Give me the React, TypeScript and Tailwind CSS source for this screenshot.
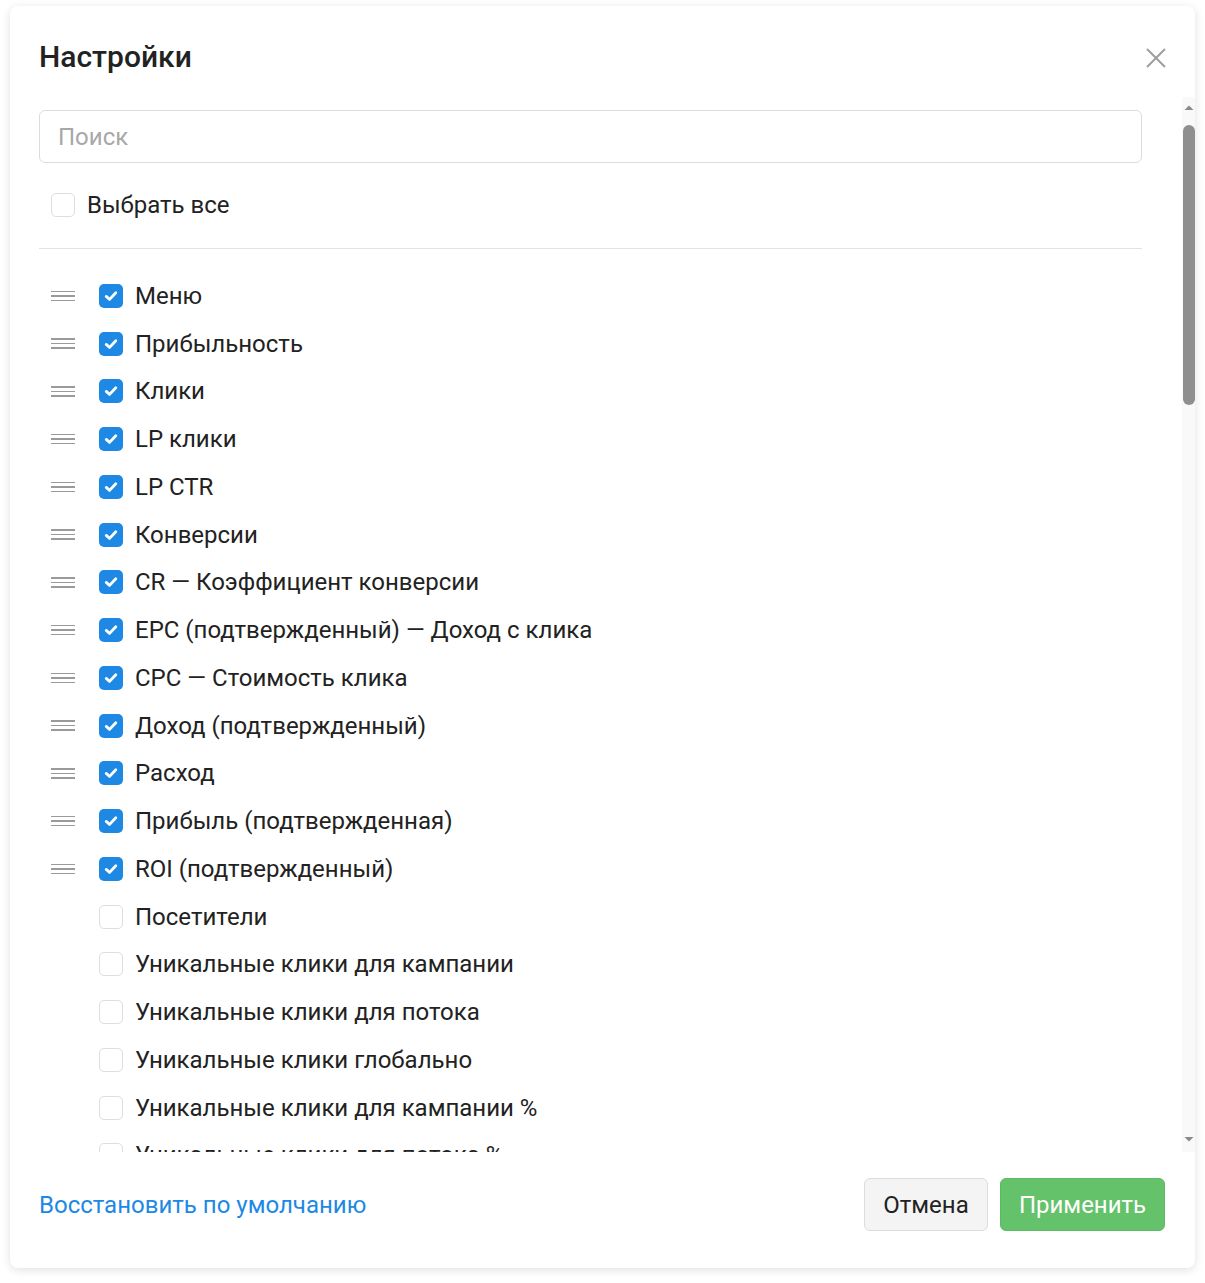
import React from "react";

const items: { label: string; checked: boolean }[] = [
  { label: "Меню", checked: true },
  { label: "Прибыльность", checked: true },
  { label: "Клики", checked: true },
  { label: "LP клики", checked: true },
  { label: "LP CTR", checked: true },
  { label: "Конверсии", checked: true },
  { label: "CR — Коэффициент конверсии", checked: true },
  { label: "EPC (подтвержденный) — Доход с клика", checked: true },
  { label: "CPC — Стоимость клика", checked: true },
  { label: "Доход (подтвержденный)", checked: true },
  { label: "Расход", checked: true },
  { label: "Прибыль (подтвержденная)", checked: true },
  { label: "ROI (подтвержденный)", checked: true },
  { label: "Посетители", checked: false },
  { label: "Уникальные клики для кампании", checked: false },
  { label: "Уникальные клики для потока", checked: false },
  { label: "Уникальные клики глобально", checked: false },
  { label: "Уникальные клики для кампании %", checked: false },
  { label: "Уникальные клики для потока %", checked: false },
];

function Box({ checked }: { checked: boolean }) {
  if (checked) {
    return (
      <div className="w-[24px] h-[24px] rounded-[5px] bg-[#1e88e5] flex items-center justify-center shrink-0">
        <svg width="18" height="18" viewBox="0 0 18 18" fill="none">
          <path d="M4.2 9.4 L7.6 12.4 L13.8 5.8" stroke="white" strokeWidth="2.8" strokeLinecap="round" strokeLinejoin="round" />
        </svg>
      </div>
    );
  }
  return <div className="w-[24px] h-[24px] rounded-[5px] border border-[#dedede] bg-white shrink-0" />;
}

function Handle() {
  return (
    <div className="w-[24px] flex flex-col gap-[3px] shrink-0">
      <div className="h-[1.5px] bg-[#9a9a9a]" />
      <div className="h-[1.5px] bg-[#9a9a9a]" />
      <div className="h-[1.5px] bg-[#9a9a9a]" />
    </div>
  );
}

export default function App() {
  return (
    <div className="w-[1205px] h-[1283px] bg-white pt-[6px] pl-[10px]" style={{ fontFamily: "Roboto, 'Noto Sans', sans-serif" }}>
      <div className="w-[1185px] h-[1262px] bg-white rounded-[8px] shadow-[0_2px_10px_rgba(0,0,0,0.12)] flex flex-col overflow-hidden">
        {/* header */}
        <div className="h-[91px] shrink-0 flex items-start justify-between pl-[29px] pr-[29px] pt-[33px]">
          <h1 className="text-[30px] leading-[36px] font-medium text-[#222]">Настройки</h1>
          <svg width="20" height="20" viewBox="0 0 20 20" className="mt-[9px]">
            <path d="M1 1 L19 19 M19 1 L1 19" stroke="#9e9e9e" strokeWidth="2" />
          </svg>
        </div>
        {/* body */}
        <div className="relative h-[1055px] shrink-0 overflow-hidden">
          <div className="pl-[29px] pr-[53px] pt-[13px]">
            <div className="h-[53px] rounded-[6px] border border-[#dcdcdc] flex items-center pl-[18px] text-[24px] text-[#a8a8a8]">
              Поиск
            </div>
            <div className="mt-[30px] flex items-center gap-[12px] pl-[12px] h-[24px]">
              <Box checked={false} />
              <span className="text-[24px] leading-[28px] text-[#222] whitespace-nowrap">Выбрать все</span>
            </div>
            <div className="mt-[31px] h-px bg-[#e2e2e2]" />
            <div className="pt-[23px]">
              {items.map((it) => (
                <div key={it.label} className="h-[47.76px] flex items-center pl-[12px]">
                  <div className="w-[48px] shrink-0">{it.checked ? <Handle /> : null}</div>
                  <Box checked={it.checked} />
                  <span className="ml-[12px] text-[24px] leading-[28px] text-[#222] whitespace-nowrap">{it.label}</span>
                </div>
              ))}
            </div>
          </div>
          {/* scrollbar */}
          <div className="absolute right-0 top-0 bottom-0 w-[13px] bg-[#f9f9f9] flex flex-col items-center">
            <svg width="12" height="8" viewBox="0 0 12 8" className="mt-[6px]">
              <path d="M1.5 7 L6 2.5 L10.5 7 Z" fill="#8a8a8a" />
            </svg>
            <div className="mt-[14px] w-[12px] h-[280px] rounded-full bg-[#8f8f8f] self-end" />
            <div className="flex-1" />
            <svg width="12" height="8" viewBox="0 0 12 8" className="mb-[8px]">
              <path d="M1.5 1 L6 5.5 L10.5 1 Z" fill="#8a8a8a" />
            </svg>
          </div>
        </div>
        {/* footer */}
        <div className="flex-1 flex items-start justify-between pl-[29px] pr-[30px] pt-[26px]">
          <div className="h-[53px] flex items-center">
            <span className="text-[24px] leading-[28px] text-[#1e88e5] whitespace-nowrap">Восстановить по умолчанию</span>
          </div>
          <div className="flex gap-[12px]">
            <button className="h-[53px] w-[124px] rounded-[6px] border border-[#dcdcdc] bg-[#f4f4f4] text-[24px] text-[#222]">Отмена</button>
            <button className="h-[53px] w-[165px] rounded-[6px] border border-[#5cbb62] bg-[#64c26a] text-[24px] text-white">Применить</button>
          </div>
        </div>
      </div>
    </div>
  );
}
